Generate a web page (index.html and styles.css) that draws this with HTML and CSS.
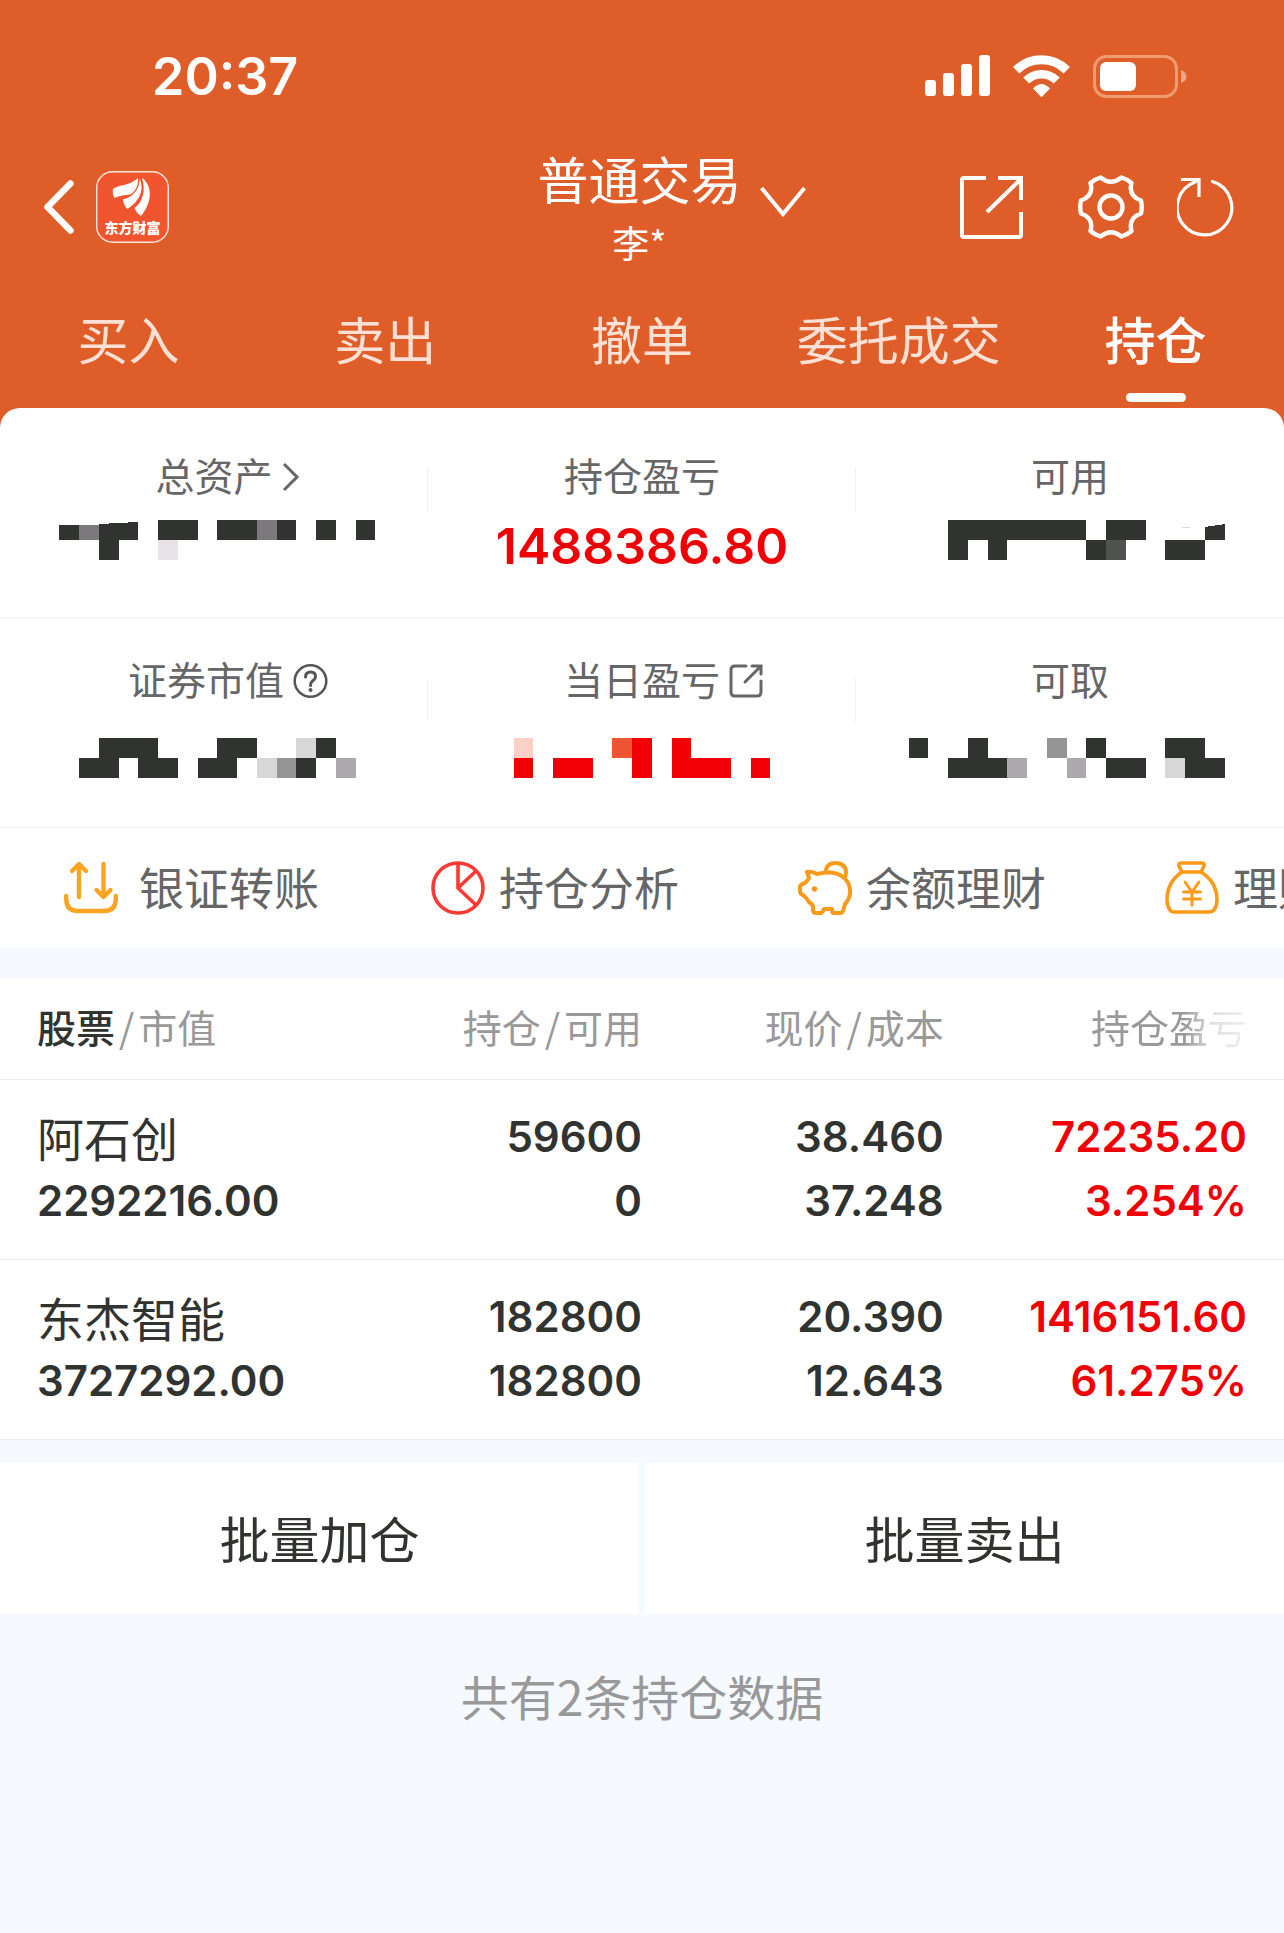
FILE: index.html
```html
<!DOCTYPE html>
<html lang="zh-CN">
<head>
    <meta charset="UTF-8">
    <meta name="viewport" content="width=device-width, initial-scale=1.0">
    <title>持仓</title>
    <link rel="stylesheet" href="styles.css">
</head>
<body>
    <header class="header">
        <div class="status-bar">
            <span class="status-time">20:37</span>
            <div class="status-icons">
                <svg width="65" height="42" viewBox="0 0 65 42" fill="#fff">
                    <rect x="0" y="25" width="11" height="16" rx="3"/>
                    <rect x="18" y="18" width="11" height="23" rx="3"/>
                    <rect x="36" y="9" width="11" height="32" rx="3"/>
                    <rect x="54" y="0" width="11" height="41" rx="3"/>
                </svg>
                <svg width="57" height="42" viewBox="0 0 57 42" fill="none" stroke="#fff">
                    <path d="M3.2 15.2A35.8 35.8 0 0 1 53.8 15.2" stroke-width="9"/>
                    <path d="M13.2 25.6A21.5 21.5 0 0 1 43.8 25.6" stroke-width="8.5"/>
                    <path d="M20 33.5Q28.5 24.5 37 33.5L29.5 41.3Q28.5 42.3 27.5 41.3Z" fill="#fff" stroke="none"/>
                </svg>
                <svg width="94" height="43" viewBox="0 0 94 43">
                    <rect x="1.5" y="1.5" width="82" height="40" rx="12" fill="none" stroke="#f09c73" stroke-width="3"/>
                    <rect x="7" y="7" width="36" height="29" rx="6" fill="#fff"/>
                    <path d="M88 15Q93.5 17 93.5 21.5T88 28Z" fill="#f0a587"/>
                </svg>
            </div>
        </div>

        <div class="nav">
            <div class="nav-left">
                <button type="button" class="icon-btn" aria-label="返回">
                    <svg width="30" height="54" viewBox="0 0 30 54" fill="none" stroke="#fff" stroke-width="6.5" stroke-linecap="round" stroke-linejoin="round">
                        <path d="M26.500 3.500L3.500 27L26.500 50.500"/>
                    </svg>
                </button>
                <svg class="logo" width="73" height="72" viewBox="0 0 73 72">
                    <rect x="0.7" y="0.7" width="71.6" height="70.6" rx="16" fill="#f05530" stroke="#ffe9df" stroke-width="1.4"/>
                    <g fill="#fff">
                        <path d="M17 18C21 14 34 15 42 7C43 15 38 22 34 23.5C28 24 22 25 18.5 27C16.5 24 16.5 20 17 18Z"/>
                        <path d="M43.5 7.5C49 19 43 31 31 38C28.5 35 27 31 27 28.5C37 26 44 18 43.5 7.5Z"/>
                        <path d="M46 7C54 12 59 28 45 45C42 43 39.5 40 38.5 37C47 31 50 19 46 7Z"/>
                        <text x="36.5" y="62" text-anchor="middle" class="logo-text">东方财富</text>
                    </g>
                </svg>
            </div>
            <button type="button" class="account">
                <span class="account-type">普通交易</span>
                <span class="account-name">李*</span>
                <svg class="account-arrow" width="46" height="32" viewBox="0 0 46 32" fill="none" stroke="#fff" stroke-width="4">
                    <path d="M1.5 2L23 28L44.5 2"/>
                </svg>
            </button>
            <div class="nav-right">
                <button type="button" class="icon-btn icon-share" aria-label="分享">
                    <svg width="63" height="63" viewBox="0 0 63 63" fill="none" stroke="#fff" stroke-width="4">
                        <path d="M26 2H4Q2 2 2 4V59Q2 61 4 61H59Q61 61 61 59V36"/>
                        <path d="M38 2H61V24"/>
                        <path d="M27 36L61 3"/>
                    </svg>
                </button>
                <button type="button" class="icon-btn icon-setting" aria-label="设置">
                    <svg width="66" height="64" viewBox="0 0 66 64" fill="none" stroke="#fff" stroke-width="4.4" stroke-linejoin="round">
                        <path d="M22.5 2.5Q17 4 12.5 8Q16 21 3 25.5Q1.5 32 3 38.5Q16 43 12.5 56Q17 60 22.5 61.5Q33 53 43.5 61.5Q49 60 53.5 56Q50 43 63 38.5Q64.5 32 63 25.5Q50 21 53.5 8Q49 4 43.5 2.5Q33 11 22.5 2.5Z"/>
                        <circle cx="33" cy="32" r="11.5"/>
                    </svg>
                </button>
                <button type="button" class="icon-btn" aria-label="刷新">
                    <svg width="58" height="60" viewBox="0 0 58 60" fill="none" stroke="#fff" stroke-width="3.2" stroke-linecap="round">
                        <path d="M35.5 4.5A27.3 27.3 0 1 1 18 5"/>
                        <path d="M4 2.5H22V20M21 3L16 6" stroke-linecap="butt"/>
                    </svg>
                </button>
            </div>
        </div>

        <nav class="tabs">
            <a href="#" class="tab">买入</a>
            <a href="#" class="tab">卖出</a>
            <a href="#" class="tab">撤单</a>
            <a href="#" class="tab">委托成交</a>
            <a href="#" class="tab active">持仓</a>
        </nav>
    </header>

    <main>
        <section class="summary">
            <div class="summary-item">
                <div class="summary-label">
                    <span>总资产
                        <svg class="label-icon" width="18" height="30" viewBox="0 0 18 30" fill="none" stroke="#666" stroke-width="3">
                            <path d="M2 2L15 15L2 28"/>
                        </svg>
                    </span>
                </div>
                <svg class="masked" viewBox="0 0 428 64" fill="#313330" shape-rendering="crispEdges" aria-hidden="true">
                    <path d="M59 11H79V26H59ZM99 10L138 8V26H119V46H99ZM158 6H198V26H158ZM217 6H257V26H217ZM277 6H296V26H277ZM316 6H336V26H316ZM356 6H375V26H356Z"/>
                    <path fill="#7c797c" d="M79 11H99V26H79ZM257 6H277V26H257Z"/>
                    <path fill="#e7e2e5" d="M158 26H178V46H158Z"/>
                </svg>
            </div>
            <div class="summary-item">
                <div class="summary-label"><span>持仓盈亏</span></div>
                <div class="summary-value">1488386.80</div>
            </div>
            <div class="summary-item">
                <div class="summary-label"><span>可用</span></div>
                <svg class="masked" viewBox="0 0 428 64" fill="#313330" shape-rendering="crispEdges" aria-hidden="true">
                    <path d="M92 6H230V26H151V46H132V26H112V46H92ZM250 6H290V26H250V46H230V26H250ZM309 26H349V46H309ZM349 13L369 10V26H349Z"/>
                    <path fill="#50524f" d="M250 26H270V46H250Z"/>
                    <path fill="#d7d7d7" d="M326 13H334V14H326Z"/>
                </svg>
            </div>
            <div class="summary-item">
                <div class="summary-label with-help">
                    <span>证券市值
                        <svg class="label-icon" width="35" height="35" viewBox="0 0 35 35" fill="none" stroke="#555" stroke-width="2.5">
                            <circle cx="17.5" cy="17.5" r="15.8"/>
                            <path d="M12.500 13.500Q12.500 8.500 17.500 8.500T22.500 13Q22.500 15.500 19.500 17.500Q17.500 19 17.500 22" stroke-width="3" stroke-linecap="round"/>
                            <circle cx="17.500" cy="26.500" r="2" fill="#555" stroke="none"/>
                        </svg>
                    </span>
                </div>
                <svg class="masked" viewBox="0 0 428 64" fill="#313330" shape-rendering="crispEdges" aria-hidden="true">
                    <path d="M99 20H158V40H178V60H138V40H119V60H79V40H99ZM217 20H257V40H237V60H198V40H217ZM316 20H336V40H316V60H296V40H316Z"/>
                    <path fill="#d7d7d7" d="M296 20H316V40H296ZM257 40H277V60H257Z"/>
                    <path fill="#949594" d="M277 40H296V60H277Z"/>
                    <path fill="#acaaad" d="M336 40H356V60H336Z"/>
                </svg>
            </div>
            <div class="summary-item">
                <div class="summary-label">
                    <span>当日盈亏
                        <svg class="label-icon" width="34" height="34" viewBox="0 0 34 34" fill="none" stroke="#666" stroke-width="3" stroke-linecap="round">
                            <path d="M17 2H6Q2 2 2 6V28Q2 32 6 32H28Q32 32 32 28V17"/>
                            <path d="M23 2H32V10M31 3L16 18"/>
                        </svg>
                    </span>
                </div>
                <svg class="masked" viewBox="0 0 428 64" fill="#f00006" shape-rendering="crispEdges" aria-hidden="true">
                    <path d="M86 40H105V60H86ZM125 40H165V60H125ZM204 20H224V60H204ZM244 20H263V40H303V60H244ZM323 40H342V60H323Z"/>
                    <path fill="#ffd0c5" d="M86 20H105V40H86Z"/>
                    <path fill="#ef5533" d="M184 20H204V40H184Z"/>
                </svg>
            </div>
            <div class="summary-item">
                <div class="summary-label"><span>可取</span></div>
                <svg class="masked" viewBox="0 0 428 64" fill="#313330" shape-rendering="crispEdges" aria-hidden="true">
                    <path d="M53 20H72V40H53ZM112 20H132V40H151V60H92V40H112ZM230 20H250V40H230ZM250 40H290V60H250ZM309 20H349V40H369V60H329V40H309Z"/>
                    <path fill="#949594" d="M191 20H211V40H191Z"/>
                    <path fill="#acaaad" d="M151 40H171V60H151ZM211 40H230V60H211Z"/>
                    <path fill="#d7d7d7" d="M309 40H329V60H309Z"/>
                </svg>
            </div>
        </section>

        <nav class="shortcuts">
            <a href="#" class="shortcut">
                <svg width="61" height="54" viewBox="0 0 61 54" fill="none" stroke="#fba422" stroke-width="4.4" stroke-linecap="round" stroke-linejoin="round">
                    <path d="M15 36V3M8 10L15 3L22 10"/>
                    <path d="M39.5 3V36M32.5 29L39.5 36L46.5 29"/>
                    <path d="M2.2 35V38Q2.2 50 14 50H40Q51.800 50 51.800 38V35"/>
                </svg>
                <span>银证转账</span>
            </a>
            <a href="#" class="shortcut">
                <svg width="54" height="54" viewBox="0 0 54 54" fill="none" stroke="#fb3a35" stroke-width="3.6">
                    <circle cx="27" cy="27" r="25"/>
                    <path d="M27 2V27L45 44M27 27L45 10"/>
                </svg>
                <span>持仓分析</span>
            </a>
            <a href="#" class="shortcut">
                <svg width="54" height="54" viewBox="0 0 54 54" fill="none" stroke="#fb9a18" stroke-width="4" stroke-linejoin="round">
                    <path d="M9 11Q14 10 19 13Q36 9 45 16Q53 22 52 33Q51 39 47 43L45 50Q44 52 42 52H36Q34 52 34 50V48H26L25 50Q24 52 22 52H18Q15 52 15 49V45Q14 43 11 41Q7 35 5 34Q2 33 2 30V26Q2 24 5 23Q8 22 11 17Z"/>
                    <path d="M27.5 10Q29 2 37 2Q48 2 48 12Q48 15 46 17"/>
                    <circle cx="16.5" cy="28" r="2.8" fill="#fb9a18" stroke="none"/>
                </svg>
                <span>余额理财</span>
            </a>
            <a href="#" class="shortcut">
                <svg width="54" height="54" viewBox="0 0 54 54" fill="none" stroke="#fb9a18" stroke-width="3.6" stroke-linejoin="round" stroke-linecap="round">
                    <path d="M17 11L14 5Q13 2 16 2H37Q40 2 39 5L36 11"/>
                    <path d="M17 11H36Q52 21 52 39Q52 45 49 49Q47 51 44 51H9Q6 51 5 49Q2 45 2 39Q2 21 17 11Z"/>
                    <path d="M20 21L27 31L34 21M18.5 31H35.5M18.5 38H35.5M27 31V44" stroke-width="3"/>
                </svg>
                <span>理财</span>
            </a>
        </nav>

        <table class="positions">
            <thead>
                <tr>
                    <th class="col-name"><b>股票</b><span class="slash">/</span>市值</th>
                    <th class="col-hold">持仓<span class="slash">/</span>可用</th>
                    <th class="col-price">现价<span class="slash">/</span>成本</th>
                    <th class="col-profit"><span class="fade">持仓盈亏</span></th>
                </tr>
            </thead>
            <tbody>
                <tr>
                    <td><div class="stock-name">阿石创</div><div>2292216.00</div></td>
                    <td><div>59600</div><div>0</div></td>
                    <td><div>38.460</div><div>37.248</div></td>
                    <td class="up"><div>72235.20</div><div>3.254%</div></td>
                </tr>
                <tr>
                    <td><div class="stock-name">东杰智能</div><div>3727292.00</div></td>
                    <td><div>182800</div><div>182800</div></td>
                    <td><div>20.390</div><div>12.643</div></td>
                    <td class="up"><div>1416151.60</div><div>61.275%</div></td>
                </tr>
            </tbody>
        </table>

        <div class="batch">
            <button type="button" class="batch-btn">批量加仓</button>
            <button type="button" class="batch-btn">批量卖出</button>
        </div>

        <p class="total">共有2条持仓数据</p>
    </main>
</body>
</html>
```
FILE: styles.css
```css
* {
    box-sizing: border-box;
}

body {
    margin: 0;
    min-height: 100vh;
    background-color: #f6faff;
    font-family: "Noto Sans CJK SC", sans-serif;
    color: #313330;
    overflow-x: hidden;
}

button {
    border: none;
    padding: 0;
    background: none;
    font-family: inherit;
    color: inherit;
    cursor: pointer;
}

a {
    color: inherit;
    text-decoration: none;
}

svg {
    display: block;
    flex-shrink: 0;
}

.header {
    background-color: #df5d29;
    color: #fff;
    /* runs on behind the rounded corners of the summary card */
    padding-bottom: 24px;
    margin-bottom: -24px;
}

/* status bar */
.status-bar {
    display: flex;
    justify-content: space-between;
    align-items: center;
    height: 146px;
    padding: 6px 97px 0 152px;
}

.status-time {
    font-family: Inter, sans-serif;
    font-size: 52px;
    font-weight: 600;
}

.status-icons {
    display: flex;
    align-items: center;
    gap: 23px;
}

/* title row */
.nav {
    display: grid;
    grid-template-columns: 1fr auto 1fr;
    align-items: center;
    padding: 0 49px 0 44px;
}

.nav-left,
.nav-right {
    display: flex;
    align-items: center;
    padding-bottom: 6px;
}

.nav-left {
    gap: 22px;
}

.nav-right {
    justify-content: flex-end;
}

.icon-share {
    margin-right: 55px;
}

.icon-setting {
    margin-right: 33px;
}

.logo-text {
    font-size: 14px;
    font-weight: 900;
}

.account {
    position: relative;
    display: flex;
    flex-direction: column;
    align-items: center;
    line-height: 64px;
}

.account-type {
    font-size: 51px;
}

.account-name {
    font-size: 37px;
}

.account-arrow {
    position: absolute;
    left: 100%;
    top: 40px;
    margin-left: 18px;
}

/* tabs */
.tabs {
    display: grid;
    grid-template-columns: repeat(5, 1fr);
}

.tab {
    position: relative;
    height: 134px;
    padding-top: 32px;
    font-size: 51px;
    line-height: 64px;
    text-align: center;
    color: #ffe0d4;
}

.tab.active {
    color: #fff;
    font-weight: 500;
}

.tab.active::after {
    content: "";
    position: absolute;
    left: 50%;
    bottom: 6px;
    width: 60px;
    height: 9px;
    margin-left: -30px;
    border-radius: 5px;
    background-color: #fff;
}

/* asset summary */
.summary {
    display: grid;
    grid-template-columns: repeat(3, 1fr);
    background-color: #fff;
    border-radius: 20px 20px 0 0;
}

.summary-item {
    position: relative;
    min-height: 210px;
    padding-top: 38px;
    border-bottom: 1px solid #f5ecee;
    text-align: center;
}

.summary-item:nth-child(n+4) {
    padding-top: 32px;
}

.summary-item:not(:nth-child(3n))::after {
    content: "";
    position: absolute;
    right: 0;
    top: 60px;
    width: 1px;
    height: 44px;
    background-color: #f5ecee;
}

.summary-label {
    margin-bottom: 12px;
    font-size: 39px;
    line-height: 56px;
    color: #666;
}

.summary-label span {
    position: relative;
}

.with-help {
    padding-right: 16px;
}

/* hangs to the right so that the label itself stays centred */
.label-icon {
    position: absolute;
    left: 100%;
    top: 50%;
    margin: 3px 0 0 9px;
    transform: translateY(-50%);
}

.summary-value {
    font-family: Inter, sans-serif;
    font-size: 50px;
    font-weight: 600;
    line-height: 64px;
    color: #f00006;
}

.masked {
    width: 100%;
}

/* shortcuts */
.shortcuts {
    display: flex;
    height: 120px;
    padding-left: 64px;
    background-color: #fff;
    overflow: hidden;
}

.shortcut {
    display: flex;
    flex: 0 0 367px;
    align-items: center;
    gap: 14px;
    font-size: 45px;
    color: #666;
    white-space: nowrap;
}

.shortcut span {
    padding-bottom: 4px;
}

/* positions */
.positions {
    width: 100%;
    margin: 30px 0 23px;
    table-layout: fixed;
    border-collapse: collapse;
    background-color: #fff;
}

.positions th,
.positions td {
    padding: 0;
    text-align: right;
    border-bottom: 1px solid #f3ecee;
}

.positions th {
    height: 101px;
    padding-bottom: 4px;
    font-size: 39px;
    font-weight: 400;
    color: #999;
}

.positions th b {
    font-weight: 500;
    color: #313330;
}

.slash {
    padding: 0 4px;
}

.positions th:first-child,
.positions td:first-child {
    padding-left: 37px;
    text-align: left;
}

.positions th:last-child,
.positions td:last-child {
    padding-right: 37px;
}

.col-name {
    width: 26%;
}

.col-hold {
    width: 24%;
}

.col-price {
    width: 23.5%;
}

.fade {
    -webkit-mask-image: linear-gradient(to right, #000 60%, rgba(0, 0, 0, 0.3) 78%, rgba(0, 0, 0, 0.15));
    mask-image: linear-gradient(to right, #000 60%, rgba(0, 0, 0, 0.3) 78%, rgba(0, 0, 0, 0.15));
}

.positions td {
    height: 180px;
    font-family: Inter, sans-serif;
    font-size: 42px;
    font-weight: 600;
    line-height: 64px;
}

.positions .stock-name {
    font-family: "Noto Sans CJK SC", sans-serif;
    font-size: 47px;
    font-weight: 400;
}

.positions .up {
    color: #f00006;
}

/* batch actions */
.batch {
    display: grid;
    grid-template-columns: 1fr 1fr;
    gap: 6px;
}

.batch-btn {
    height: 151px;
    padding-bottom: 3px;
    background-color: #fff;
    font-size: 50px;
}

.total {
    margin: 47px 0;
    text-align: center;
    font-size: 48px;
    line-height: 68px;
    color: #999;
}
```
